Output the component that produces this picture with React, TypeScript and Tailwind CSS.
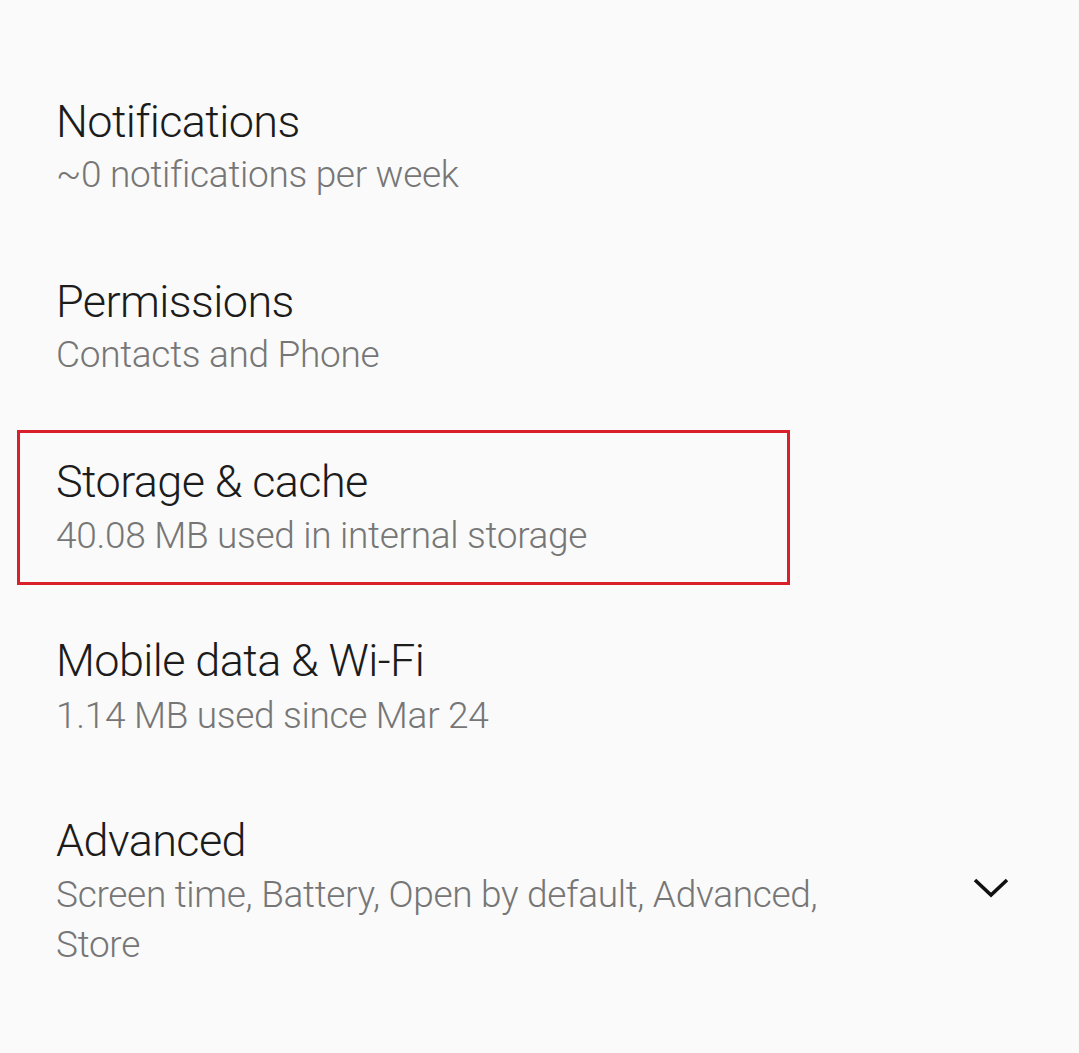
import React from "react";

const font = { fontFamily: "Roboto, 'Noto Sans', sans-serif" };

const T = "text-[45px] leading-[56px] text-[#1c1c1c] tracking-[-0.6px] font-light";
const S = "text-[37px] leading-[50px] text-[#767676] tracking-[-0.3px] font-light";

function Row({ title, sub }: { title: string; sub: string }) {
  return (
    <div className="flex flex-col h-[180px] pt-[34px]">
      <div className={T}>{title}</div>
      <div className={S}>{sub}</div>
    </div>
  );
}

export default function App() {
  return (
    <div className="w-[1079px] h-[1053px] bg-[#fafafa] overflow-hidden" style={font}>
      <div className="pt-[60px] pl-[56px]">
        <Row title="Notifications" sub="~0 notifications per week" />
        <Row title="Permissions" sub="Contacts and Phone" />
      </div>
      <div className="mt-[10px] ml-[17px] w-[773px] h-[155px] border-[3px] border-[#d9202a] pl-[36px] pt-[21px] flex flex-col">
        <div className={T}>Storage &amp; cache</div>
        <div className={`${S} mt-[1px]`}>40.08 MB used in internal storage</div>
      </div>
      <div className="pl-[56px]">
        <div className="flex flex-col h-[180px] pt-[48px]">
          <div className={T}>Mobile data &amp; Wi-Fi</div>
          <div className={`${S} mt-[2px]`}>1.14 MB used since Mar 24</div>
        </div>
        <div className="flex items-center pt-[48px]">
          <div className="flex flex-col w-[810px]">
            <div className={T}>Advanced</div>
            <div className={`${S} mt-[1px]`}>Screen time, Battery, Open by default, Advanced, Store</div>
          </div>
          <svg className="ml-[105px] mb-[8px]" width="40" height="24" viewBox="0 0 40 24">
            <polyline points="4,4 20,19 36,4" fill="none" stroke="#111" strokeWidth="3.6" />
          </svg>
        </div>
      </div>
    </div>
  );
}
